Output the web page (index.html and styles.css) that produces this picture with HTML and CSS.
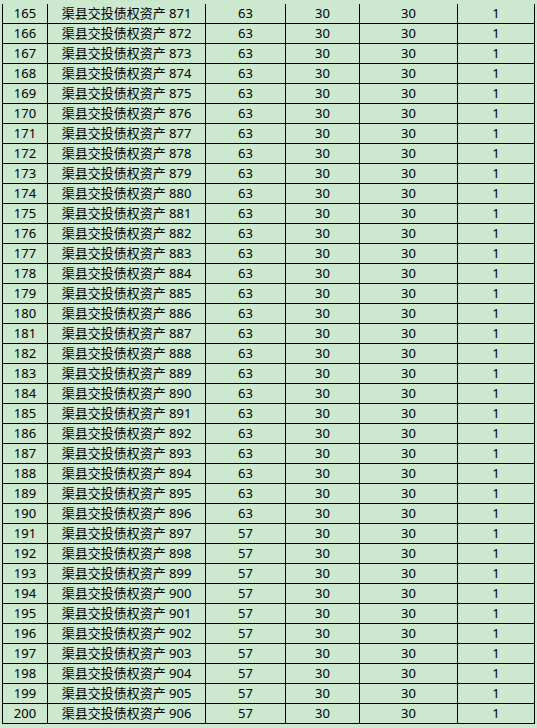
FILE: index.html
```html
<!DOCTYPE html>
<html lang="zh">
<head>
<meta charset="utf-8">
<title>渠县交投债权资产</title>
<link rel="stylesheet" href="styles.css">
</head>
<body>
<div class="sheet">
<div class="row"><div class="c">165</div><div class="c">渠县交投债权资产 871</div><div class="c">63</div><div class="c">30</div><div class="c">30</div><div class="c">1</div></div>
<div class="row"><div class="c">166</div><div class="c">渠县交投债权资产 872</div><div class="c">63</div><div class="c">30</div><div class="c">30</div><div class="c">1</div></div>
<div class="row"><div class="c">167</div><div class="c">渠县交投债权资产 873</div><div class="c">63</div><div class="c">30</div><div class="c">30</div><div class="c">1</div></div>
<div class="row"><div class="c">168</div><div class="c">渠县交投债权资产 874</div><div class="c">63</div><div class="c">30</div><div class="c">30</div><div class="c">1</div></div>
<div class="row"><div class="c">169</div><div class="c">渠县交投债权资产 875</div><div class="c">63</div><div class="c">30</div><div class="c">30</div><div class="c">1</div></div>
<div class="row"><div class="c">170</div><div class="c">渠县交投债权资产 876</div><div class="c">63</div><div class="c">30</div><div class="c">30</div><div class="c">1</div></div>
<div class="row"><div class="c">171</div><div class="c">渠县交投债权资产 877</div><div class="c">63</div><div class="c">30</div><div class="c">30</div><div class="c">1</div></div>
<div class="row"><div class="c">172</div><div class="c">渠县交投债权资产 878</div><div class="c">63</div><div class="c">30</div><div class="c">30</div><div class="c">1</div></div>
<div class="row"><div class="c">173</div><div class="c">渠县交投债权资产 879</div><div class="c">63</div><div class="c">30</div><div class="c">30</div><div class="c">1</div></div>
<div class="row"><div class="c">174</div><div class="c">渠县交投债权资产 880</div><div class="c">63</div><div class="c">30</div><div class="c">30</div><div class="c">1</div></div>
<div class="row"><div class="c">175</div><div class="c">渠县交投债权资产 881</div><div class="c">63</div><div class="c">30</div><div class="c">30</div><div class="c">1</div></div>
<div class="row"><div class="c">176</div><div class="c">渠县交投债权资产 882</div><div class="c">63</div><div class="c">30</div><div class="c">30</div><div class="c">1</div></div>
<div class="row"><div class="c">177</div><div class="c">渠县交投债权资产 883</div><div class="c">63</div><div class="c">30</div><div class="c">30</div><div class="c">1</div></div>
<div class="row"><div class="c">178</div><div class="c">渠县交投债权资产 884</div><div class="c">63</div><div class="c">30</div><div class="c">30</div><div class="c">1</div></div>
<div class="row"><div class="c">179</div><div class="c">渠县交投债权资产 885</div><div class="c">63</div><div class="c">30</div><div class="c">30</div><div class="c">1</div></div>
<div class="row"><div class="c">180</div><div class="c">渠县交投债权资产 886</div><div class="c">63</div><div class="c">30</div><div class="c">30</div><div class="c">1</div></div>
<div class="row"><div class="c">181</div><div class="c">渠县交投债权资产 887</div><div class="c">63</div><div class="c">30</div><div class="c">30</div><div class="c">1</div></div>
<div class="row"><div class="c">182</div><div class="c">渠县交投债权资产 888</div><div class="c">63</div><div class="c">30</div><div class="c">30</div><div class="c">1</div></div>
<div class="row"><div class="c">183</div><div class="c">渠县交投债权资产 889</div><div class="c">63</div><div class="c">30</div><div class="c">30</div><div class="c">1</div></div>
<div class="row"><div class="c">184</div><div class="c">渠县交投债权资产 890</div><div class="c">63</div><div class="c">30</div><div class="c">30</div><div class="c">1</div></div>
<div class="row"><div class="c">185</div><div class="c">渠县交投债权资产 891</div><div class="c">63</div><div class="c">30</div><div class="c">30</div><div class="c">1</div></div>
<div class="row"><div class="c">186</div><div class="c">渠县交投债权资产 892</div><div class="c">63</div><div class="c">30</div><div class="c">30</div><div class="c">1</div></div>
<div class="row"><div class="c">187</div><div class="c">渠县交投债权资产 893</div><div class="c">63</div><div class="c">30</div><div class="c">30</div><div class="c">1</div></div>
<div class="row"><div class="c">188</div><div class="c">渠县交投债权资产 894</div><div class="c">63</div><div class="c">30</div><div class="c">30</div><div class="c">1</div></div>
<div class="row"><div class="c">189</div><div class="c">渠县交投债权资产 895</div><div class="c">63</div><div class="c">30</div><div class="c">30</div><div class="c">1</div></div>
<div class="row"><div class="c">190</div><div class="c">渠县交投债权资产 896</div><div class="c">63</div><div class="c">30</div><div class="c">30</div><div class="c">1</div></div>
<div class="row"><div class="c">191</div><div class="c">渠县交投债权资产 897</div><div class="c">57</div><div class="c">30</div><div class="c">30</div><div class="c">1</div></div>
<div class="row"><div class="c">192</div><div class="c">渠县交投债权资产 898</div><div class="c">57</div><div class="c">30</div><div class="c">30</div><div class="c">1</div></div>
<div class="row"><div class="c">193</div><div class="c">渠县交投债权资产 899</div><div class="c">57</div><div class="c">30</div><div class="c">30</div><div class="c">1</div></div>
<div class="row"><div class="c">194</div><div class="c">渠县交投债权资产 900</div><div class="c">57</div><div class="c">30</div><div class="c">30</div><div class="c">1</div></div>
<div class="row"><div class="c">195</div><div class="c">渠县交投债权资产 901</div><div class="c">57</div><div class="c">30</div><div class="c">30</div><div class="c">1</div></div>
<div class="row"><div class="c">196</div><div class="c">渠县交投债权资产 902</div><div class="c">57</div><div class="c">30</div><div class="c">30</div><div class="c">1</div></div>
<div class="row"><div class="c">197</div><div class="c">渠县交投债权资产 903</div><div class="c">57</div><div class="c">30</div><div class="c">30</div><div class="c">1</div></div>
<div class="row"><div class="c">198</div><div class="c">渠县交投债权资产 904</div><div class="c">57</div><div class="c">30</div><div class="c">30</div><div class="c">1</div></div>
<div class="row"><div class="c">199</div><div class="c">渠县交投债权资产 905</div><div class="c">57</div><div class="c">30</div><div class="c">30</div><div class="c">1</div></div>
<div class="row"><div class="c">200</div><div class="c">渠县交投债权资产 906</div><div class="c">57</div><div class="c">30</div><div class="c">30</div><div class="c">1</div></div>
</div>
</body>
</html>
```

FILE: styles.css
```css
html, body {
  margin: 0;
  padding: 0;
  background: #cce8cf;
}
body {
  padding-top: 4px;
  font-family: "Noto Sans", "Noto Sans CJK SC", sans-serif;
  font-size: 13px;
  color: #000;
}
.sheet {
  margin-left: 2px;
  width: 531px;
  background: #000;
  border-left: 1px solid #000;
  border-right: 1px solid #000;
  border-bottom: 1px solid #000;
  display: grid;
  row-gap: 1px;
}
.row {
  display: grid;
  grid-template-columns: 44px 157px 79px 73px 97px 76px;
  column-gap: 1px;
  height: 19px;
}
.c {
  background: #cce8cf;
  text-align: center;
  line-height: 19px;
  height: 19px;
  overflow: hidden;
  white-space: nowrap;
}
```
